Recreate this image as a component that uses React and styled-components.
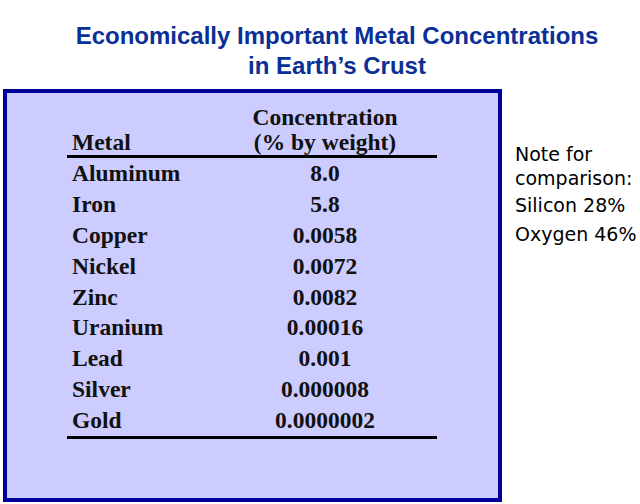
import React from "react";
import styled, { createGlobalStyle } from "styled-components";

const GlobalStyle = createGlobalStyle`
  html, body {
    margin: 0;
    padding: 0;
    background: #ffffff;
  }
`;

const Page = styled.div`
  width: 640px;
  height: 504px;
  overflow: hidden;
  background: #ffffff;
`;

const Title = styled.h1`
  margin: 0;
  padding: 21px 0 0 34px;
  height: 68px;
  text-align: center;
  font-family: "Liberation Sans", Arial, sans-serif;
  font-weight: bold;
  font-size: 24px;
  line-height: 30px;
  color: #0a2f96;
`;

const Content = styled.div`
  display: flex;
  align-items: flex-start;
  gap: 13px;
  padding-left: 3px;
`;

const Panel = styled.div`
  box-sizing: border-box;
  width: 499px;
  height: 413px;
  border: 4px solid #000099;
  background: #ccccff;
  padding: 12px 0 0 60px;
`;

const Table = styled.div`
  display: grid;
  grid-template-columns: 146px 224px;
  width: 370px;
  font-family: "Liberation Serif", "Times New Roman", serif;
  font-weight: bold;
  font-size: 23.5px;
  color: #111111;
`;

const HeadCell = styled.div`
  line-height: 25px;
  border-bottom: 3px solid #000000;
  display: flex;
  flex-direction: column;
  justify-content: flex-end;
  align-items: ${(p) => (p.$center ? "center" : "flex-start")};
  padding-left: ${(p) => (p.$center ? "0" : "5px")};
`;

const Cell = styled.div`
  line-height: 30.875px;
  text-align: ${(p) => (p.$center ? "center" : "left")};
  padding-left: ${(p) => (p.$center ? "0" : "5px")};
  border-bottom: ${(p) => (p.$last ? "3px solid #000000" : "none")};
`;

const Note = styled.div`
  margin-top: 53px;
  font-family: "DejaVu Sans", Verdana, sans-serif;
  font-size: 19px;
  color: #000000;
`;

const NoteHead = styled.p`
  margin: 0 0 1px;
  line-height: 24px;
`;

const NoteItem = styled.p`
  margin: 0;
  line-height: 29px;
`;

const rows = [
  ["Aluminum", "8.0"],
  ["Iron", "5.8"],
  ["Copper", "0.0058"],
  ["Nickel", "0.0072"],
  ["Zinc", "0.0082"],
  ["Uranium", "0.00016"],
  ["Lead", "0.001"],
  ["Silver", "0.000008"],
  ["Gold", "0.0000002"],
];

export default function App() {
  return (
    <Page>
      <GlobalStyle />
      <Title>
        Economically Important Metal Concentrations
        <br />
        in Earth’s Crust
      </Title>
      <Content>
        <Panel>
          <Table>
            <HeadCell>Metal</HeadCell>
            <HeadCell $center>
              <span>Concentration</span>
              <span>(% by weight)</span>
            </HeadCell>
            {rows.map(([metal, value], i) => {
              const last = i === rows.length - 1;
              return (
                <React.Fragment key={metal}>
                  <Cell $last={last}>{metal}</Cell>
                  <Cell $center $last={last}>
                    {value}
                  </Cell>
                </React.Fragment>
              );
            })}
          </Table>
        </Panel>
        <Note>
          <NoteHead>
            Note for
            <br />
            comparison:
          </NoteHead>
          <NoteItem>Silicon 28%</NoteItem>
          <NoteItem>Oxygen 46%</NoteItem>
        </Note>
      </Content>
    </Page>
  );
}
